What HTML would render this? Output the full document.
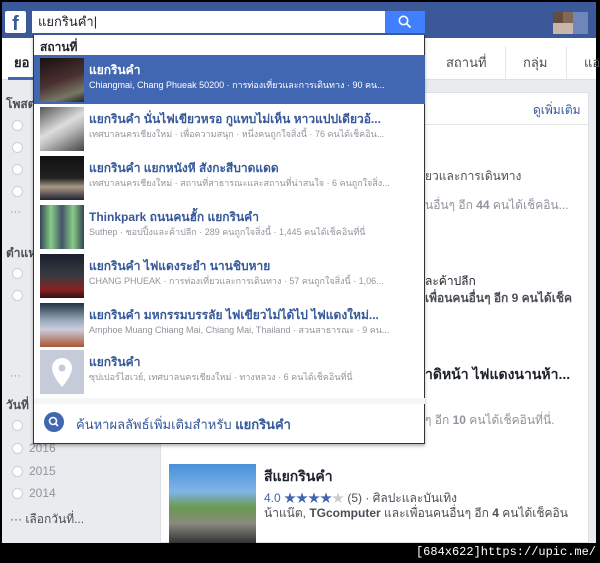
<!DOCTYPE html>
<html><head><meta charset="utf-8"><style>
*{margin:0;padding:0;box-sizing:border-box}
body{width:600px;height:563px;background:#000;position:relative;overflow:hidden;font-family:"Liberation Sans","Noto Sans CJK SC",sans-serif}
.a{position:absolute}
.t{font-size:12px;font-weight:bold;color:#365899;white-space:nowrap}
.s{font-size:9px;color:#90949c;white-space:nowrap}
.th{position:absolute;left:6px;width:44px;height:44px}
.it{position:absolute;left:0;width:391px;height:49px}
.radio{position:absolute;width:11px;height:11px;border-radius:50%;background:#fff;border:1px solid #ccd0d5}
</style></head><body>
<div class="a" style="left:2px;top:2px;width:594px;height:541px;background:#e9ebee"></div>
<!-- header -->
<div class="a" style="left:2px;top:2px;width:594px;height:36px;background:#3b5998"></div>
<div class="a" style="left:5px;top:11px;width:21px;height:22px;background:#fff;border-radius:2px;color:#3b5998;font-weight:bold;font-size:20px;text-align:center;line-height:26px;overflow:hidden">f</div>
<div class="a" style="left:32px;top:11px;width:353px;height:22px;background:#fff;font-size:13px;line-height:22px;padding-left:6px;color:#1d2129">แยกรินคำ|</div>
<div class="a" style="left:385px;top:11px;width:40px;height:22px;background:#4080ff"></div>
<svg class="a" style="left:398px;top:15px" width="14" height="14" viewBox="0 0 14 14"><circle cx="5.5" cy="5.5" r="4.2" fill="none" stroke="#fff" stroke-width="1.6"/><path d="M8.6 8.6L12.5 12.5" stroke="#fff" stroke-width="1.8"/></svg>
<div class="a" style="left:553px;top:12px;width:20px;height:22px;background:linear-gradient(90deg,#6b4a35 0 50%,#8a6a50 50%);opacity:.9"></div>
<div class="a" style="left:553px;top:23px;width:20px;height:11px;background:#c8b6a8"></div>
<div class="a" style="left:573px;top:12px;width:15px;height:22px;background:#6f86bb"></div>
<!-- nav -->
<div class="a" style="left:2px;top:38px;width:594px;height:42px;background:#fff;border-bottom:1px solid #dddfe2"></div>
<div class="a" style="left:14px;top:52px;font-size:13px;color:#1d2129;font-weight:bold">ยอ</div>
<div class="a" style="left:8px;top:77px;width:30px;height:3px;background:#4267b2"></div>
<div class="a" style="left:446px;top:52px;font-size:13px;color:#4b4f56">สถานที่</div>
<div class="a" style="left:505px;top:46px;width:1px;height:32px;background:#e5e5e5"></div>
<div class="a" style="left:523px;top:52px;font-size:13px;color:#4b4f56">กลุ่ม</div>
<div class="a" style="left:566px;top:46px;width:1px;height:32px;background:#e5e5e5"></div>
<div class="a" style="left:584px;top:52px;font-size:13px;color:#4b4f56">แอ</div>
<!-- sidebar -->
<div class="a" style="left:6px;top:95px;font-size:12px;font-weight:bold;color:#4b4f56">โพสต</div>
<div class="radio" style="left:12px;top:120px"></div><div class="radio" style="left:12px;top:142px"></div><div class="radio" style="left:12px;top:164px"></div><div class="radio" style="left:12px;top:186px"></div>
<div class="a" style="left:10px;top:206px;font-size:11px;color:#90949c">···</div>
<div class="a" style="left:6px;top:244px;font-size:12px;font-weight:bold;color:#4b4f56">ตำแห</div>
<div class="radio" style="left:12px;top:268px"></div><div class="radio" style="left:12px;top:290px"></div>
<div class="a" style="left:10px;top:370px;font-size:11px;color:#90949c">···</div>
<div class="a" style="left:6px;top:396px;font-size:12px;font-weight:bold;color:#4b4f56">วันที่</div>
<div class="radio" style="left:12px;top:420px"></div>
<div class="radio" style="left:12px;top:443px"></div><div class="a" style="left:29px;top:441px;font-size:12px;color:#90949c">2016</div>
<div class="radio" style="left:12px;top:466px"></div><div class="a" style="left:29px;top:464px;font-size:12px;color:#90949c">2015</div>
<div class="radio" style="left:12px;top:488px"></div><div class="a" style="left:29px;top:486px;font-size:12px;color:#90949c">2014</div>
<div class="a" style="left:10px;top:510px;font-size:12px;color:#4b4f56">··· เลือกวันที่...</div>
<!-- card -->
<div class="a" style="left:160px;top:92px;width:429px;height:451px;background:#fff;border:1px solid #dddfe2"></div>
<div class="a" style="left:160px;top:124px;width:429px;height:1px;background:#e5e5e5"></div>
<div class="a" style="left:533px;top:101px;font-size:12px;color:#365899">ดูเพิ่มเติม</div>
<div class="a" style="left:425px;top:167px;font-size:12px;color:#4b4f56">ยวและการเดินทาง</div>
<div class="a" style="left:425px;top:196px;font-size:12px;color:#90949c">นอื่นๆ อีก <b>44</b> คนได้เช็คอิน...</div>
<div class="a" style="left:425px;top:272px;font-size:12px;color:#1d2129">ละค้าปลีก</div>
<div class="a" style="left:425px;top:289px;font-size:12px;color:#4b4f56;font-weight:bold;white-space:nowrap">เพื่อนคนอื่นๆ อีก 9 คนได้เช็ค</div>
<div class="a" style="left:425px;top:364px;font-size:14px;color:#1d2129;font-weight:bold;white-space:nowrap">าดิหน้า ไฟแดงนานห้า...</div>
<div class="a" style="left:425px;top:411px;font-size:12px;color:#90949c;white-space:nowrap">ๆ อีก <b>10</b> คนได้เช็คอินที่นี่.</div>
<div class="a" style="left:169px;top:464px;width:87px;height:79px;background:linear-gradient(180deg,#4a90d9 0,#7fb4e8 35%,#6a9a50 55%,#8a8a80 75%,#333 100%)"></div>
<div class="a" style="left:264px;top:466px;font-size:14px;font-weight:bold;color:#1d2129">สีแยกรินคำ</div>
<div class="a" style="left:264px;top:489px;font-size:12px;color:#4267b2;white-space:nowrap">4.0 ★★★★<span style="color:#ccc">★</span> <span style="color:#4b4f56">(5) · ศิลปะและบันเทิง</span></div>
<div class="a" style="left:264px;top:504px;font-size:12px;color:#4b4f56;white-space:nowrap">น้าแน๊ต, <b>TGcomputer</b> และเพื่อนคนอื่นๆ อีก <b>4</b> คนได้เช็คอิน</div>
<!-- dropdown -->
<div class="a" style="left:33px;top:35px;width:392px;height:409px;background:#fff;border:1px solid #333;border-top:none;box-shadow:0 2px 3px rgba(0,0,0,.3)">
 <div class="a" style="left:6px;top:3px;font-size:12px;font-weight:bold;color:#1d2129">สถานที่</div>
 <div class="it" style="top:20px;background:#4267b2">
  <div class="th" style="top:3px;background:linear-gradient(160deg,#1a1010,#4a3030 50%,#776 80%,#222)"></div>
  <div class="a t" style="left:55px;top:6px;color:#fff">แยกรินคำ</div>
  <div class="a s" style="left:55px;top:23px;color:#fff">Chiangmai, Chang Phueak 50200 · การท่องเที่ยวและการเดินทาง · 90 คน...</div>
 </div>
 <div class="it" style="top:70px"><div class="th" style="top:2px;background:linear-gradient(150deg,#555,#ddd 45%,#bbb 60%,#444)"></div>
  <div class="a t" style="left:55px;top:5px">แยกรินคำ นั่นไฟเขียวหรอ กูแทบไม่เห็น หาวแปปเดียวอ้...</div>
  <div class="a s" style="left:55px;top:22px">เทศบาลนครเชียงใหม่ · เพื่อความสนุก · หนึ่งคนถูกใจสิ่งนี้ · 76 คนได้เช็คอิน...</div></div>
 <div class="it" style="top:119px"><div class="th" style="top:2px;background:linear-gradient(180deg,#111,#222 50%,#a98 70%,#223)"></div>
  <div class="a t" style="left:55px;top:5px">แยกรินคำ แยกหนังหี สังกะสีบาดแดด</div>
  <div class="a s" style="left:55px;top:22px">เทศบาลนครเชียงใหม่ · สถานที่สาธารณะและสถานที่น่าสนใจ · 6 คนถูกใจสิ่ง...</div></div>
 <div class="it" style="top:168px"><div class="th" style="top:2px;background:linear-gradient(90deg,#345,#8c8 25%,#456 50%,#8c8 75%,#345)"></div>
  <div class="a t" style="left:55px;top:5px">Thinkpark ถนนคนฮั้ก แยกรินคำ</div>
  <div class="a s" style="left:55px;top:22px">Suthep · ชอปปิ้งและค้าปลีก · 289 คนถูกใจสิ่งนี้ · 1,445 คนได้เช็คอินที่นี่</div></div>
 <div class="it" style="top:217px"><div class="th" style="top:2px;background:linear-gradient(180deg,#1a2030,#3a3a40 50%,#822 80%,#311)"></div>
  <div class="a t" style="left:55px;top:5px">แยกรินคำ ไฟแดงระยำ นานชิบหาย</div>
  <div class="a s" style="left:55px;top:22px">CHANG PHUEAK · การท่องเที่ยวและการเดินทาง · 57 คนถูกใจสิ่งนี้ · 1,06...</div></div>
 <div class="it" style="top:266px"><div class="th" style="top:2px;background:linear-gradient(180deg,#234,#9ab 40%,#ccd 60%,#a53)"></div>
  <div class="a t" style="left:55px;top:5px">แยกรินคำ มหกรรมบรรลัย ไฟเขียวไม่ได้ไป ไฟแดงใหม่...</div>
  <div class="a s" style="left:55px;top:22px">Amphoe Muang Chiang Mai, Chiang Mai, Thailand · สวนสาธารณะ · 9 คน...</div></div>
 <div class="it" style="top:315px"><div class="th" style="top:0px;background:#c5cbd9"><svg width="44" height="44" viewBox="0 0 44 44"><path d="M22 8a10 10 0 0 0-10 10c0 8 10 19 10 19s10-11 10-19a10 10 0 0 0-10-10z" fill="#fff"/><circle cx="22" cy="18" r="3.5" fill="#c5cbd9"/></svg></div>
  <div class="a t" style="left:55px;top:3px">แยกรินคำ</div>
  <div class="a s" style="left:55px;top:20px">ซุปเปอร์ไฮเวย์, เทศบาลนครเชียงใหม่ · ทางหลวง · 6 คนได้เช็คอินที่นี่</div></div>
 <div class="a" style="left:0;top:363px;width:391px;height:6px;background:#f5f6f7"></div>
 <div class="a" style="left:10px;top:377px;width:20px;height:20px;border-radius:50%;background:#4267b2"><svg width="20" height="20" viewBox="0 0 20 20"><circle cx="9" cy="9" r="3.5" fill="none" stroke="#fff" stroke-width="1.6"/><path d="M11.5 11.5L14 14" stroke="#fff" stroke-width="1.8"/></svg></div>
 <div class="a" style="left:42px;top:379px;font-size:13px;color:#365899;white-space:nowrap">ค้นหาผลลัพธ์เพิ่มเติมสำหรับ <b>แยกรินคำ</b></div>
</div>
<div class="a" style="right:4px;top:545px;font-family:'Liberation Mono',monospace;font-size:12px;color:#fff">[684x622]https://upic.me/</div>
</body></html>
